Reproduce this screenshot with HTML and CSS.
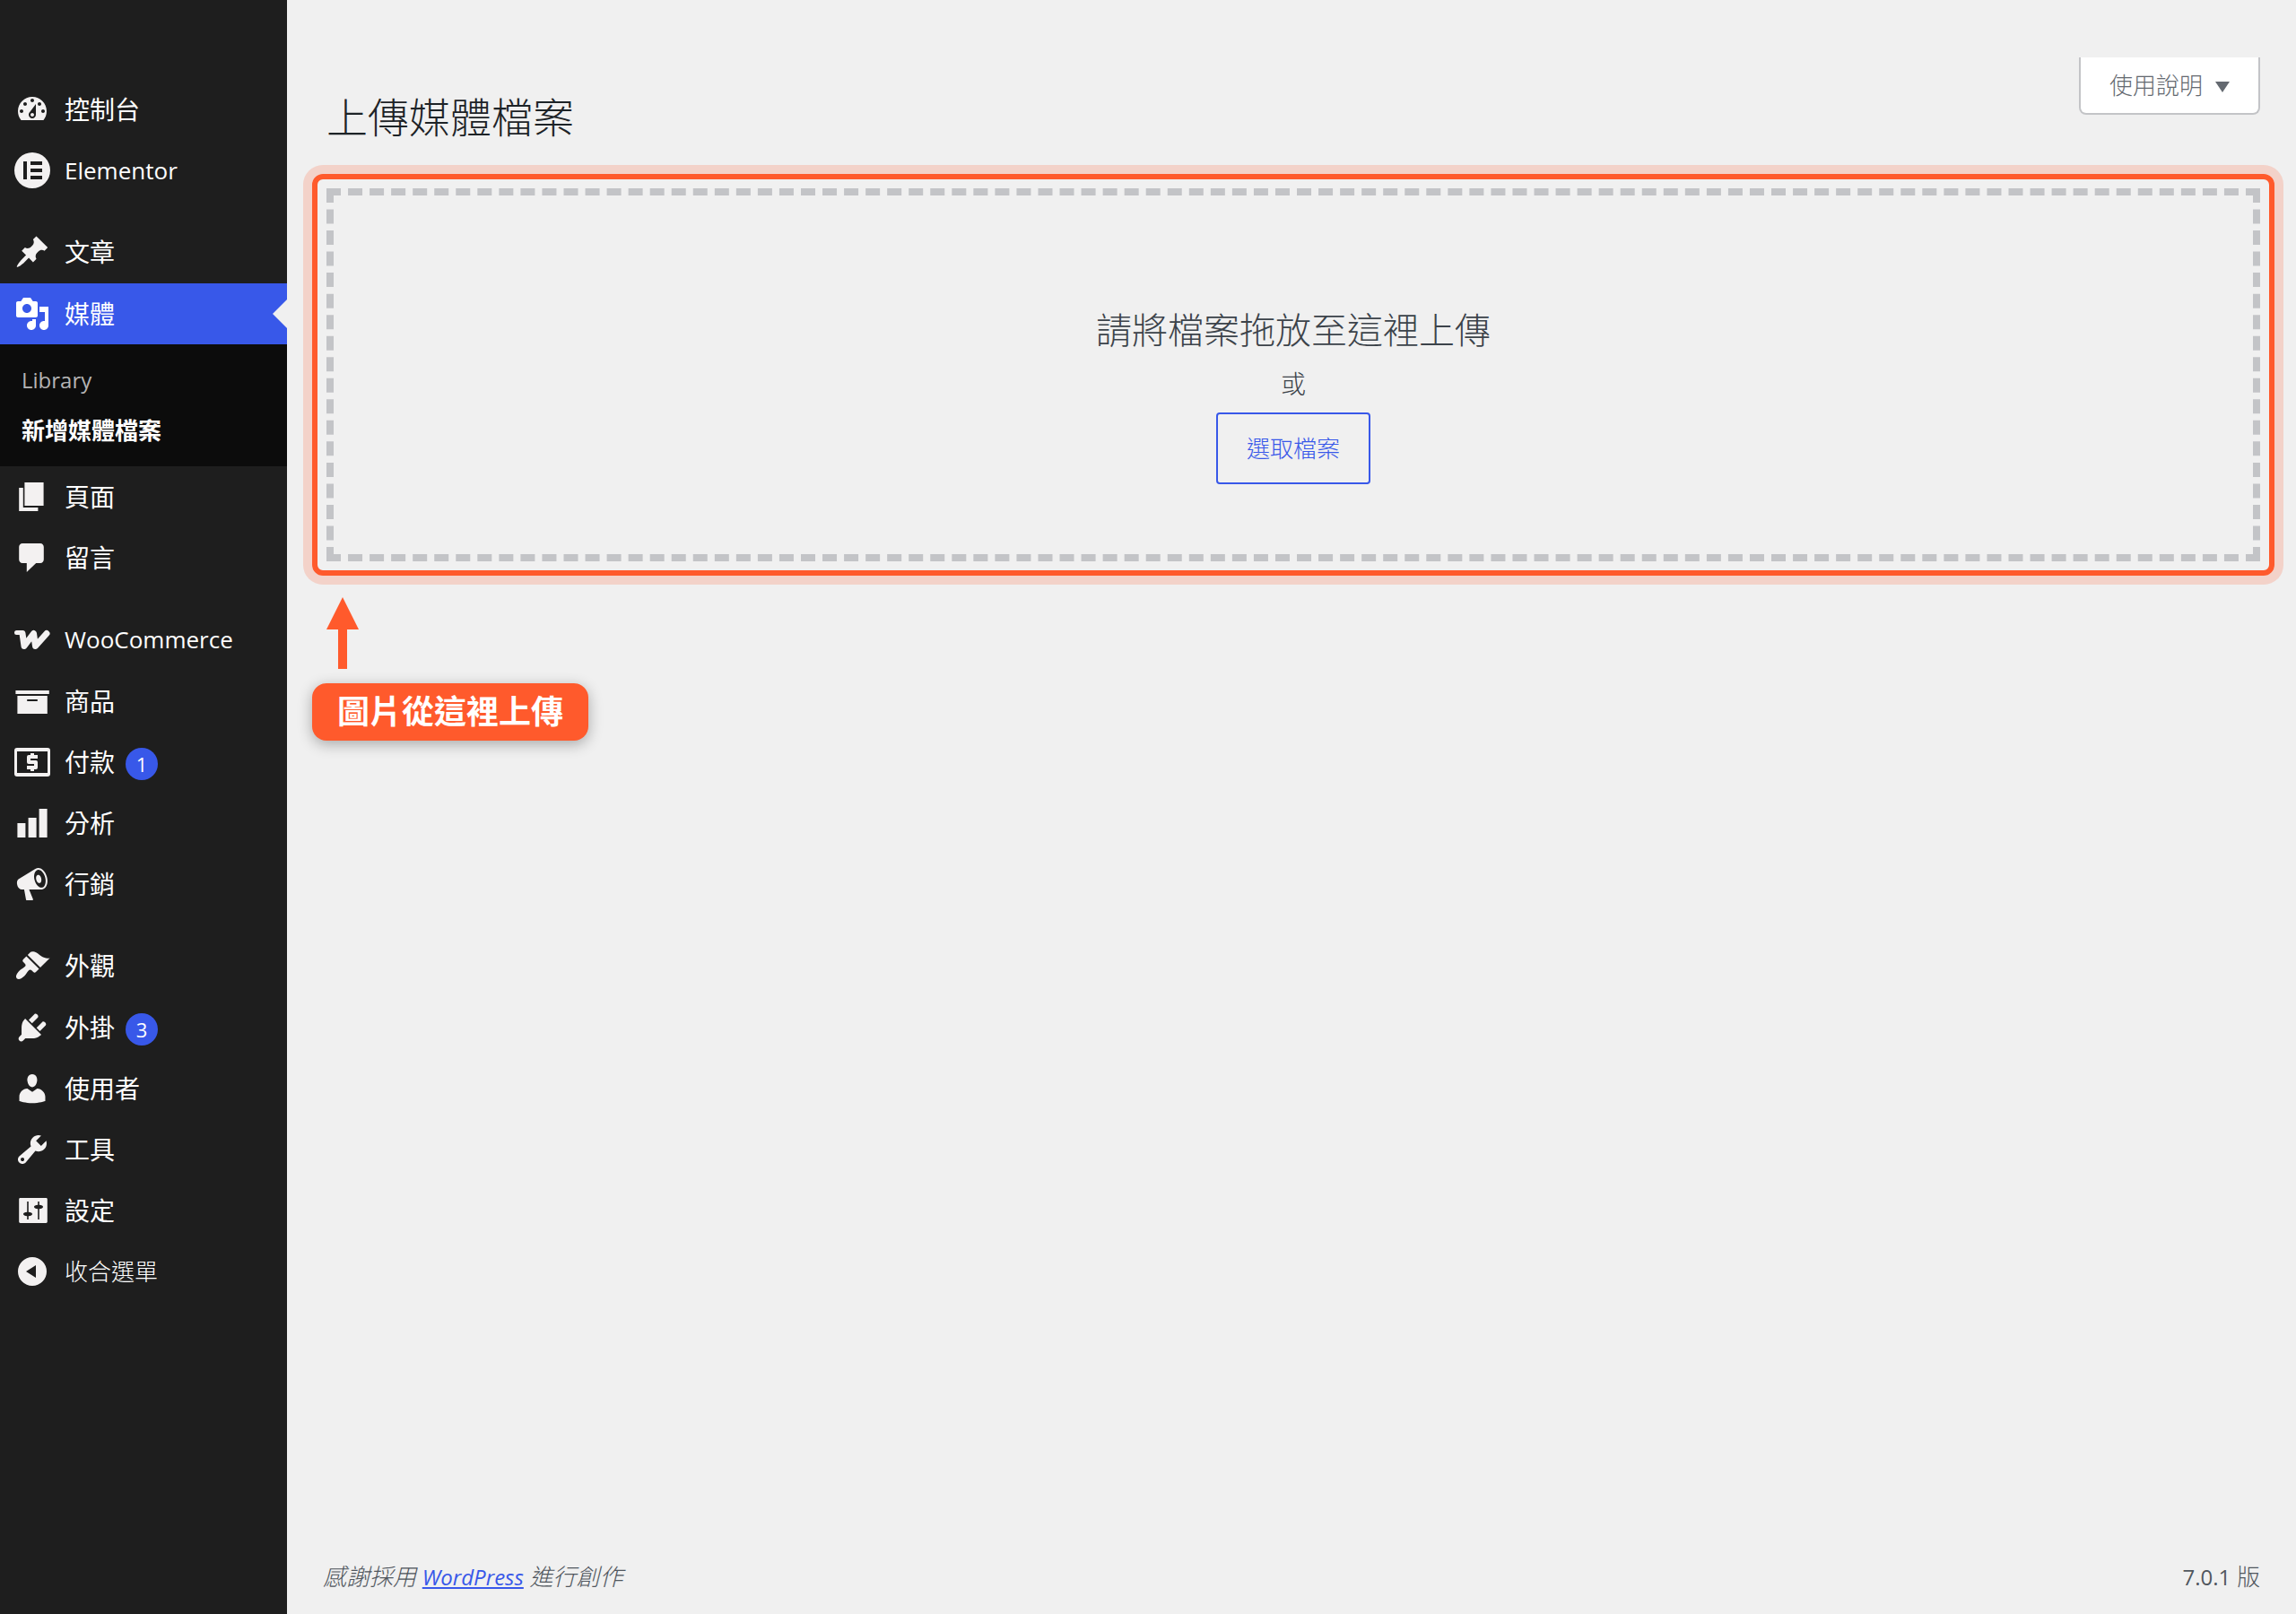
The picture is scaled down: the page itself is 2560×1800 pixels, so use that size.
FILE: index.html
```html
<!DOCTYPE html>
<html lang="zh-Hant">
<head>
  <meta charset="UTF-8" />
  <meta name="viewport" content="width=device-width, initial-scale=1.0" />
  <title>上傳媒體檔案</title>
  <link rel="stylesheet" href="styles.css">
</head>
<body>
  <nav class="sidebar">
    <ul class="menu">
      <li>
        <a href="#"><svg class="icon" viewBox="0 0 20 20"><path d="M3.76 16h12.48c1.1-1.37 1.76-3.11 1.76-5 0-4.42-3.58-8-8-8s-8 3.58-8 8c0 1.89.66 3.63 1.76 5zM10 4c.55 0 1 .45 1 1s-.45 1-1 1-1-.45-1-1 .45-1 1-1zM6 6c.55 0 1 .45 1 1s-.45 1-1 1-1-.45-1-1 .45-1 1-1zm8 0c.55 0 1 .45 1 1s-.45 1-1 1-1-.45-1-1 .45-1 1-1zm-5.37 5.55L12 7v6c0 1.1-.9 2-2 2s-2-.9-2-2c0-.57.24-1.08.63-1.45zM4 10c.55 0 1 .45 1 1s-.45 1-1 1-1-.45-1-1 .45-1 1-1zm12 0c.55 0 1 .45 1 1s-.45 1-1 1-1-.45-1-1 .45-1 1-1zm-5 3c0-.55-.45-1-1-1s-1 .45-1 1 .45 1 1 1 1-.45 1-1z"/></svg><span class="label">控制台</span></a>
      </li>
      <li>
        <a href="#"><svg class="icon" viewBox="0 0 40 40"><path fill-rule="evenodd" d="M20 0a20 20 0 1 0 0 40 20 20 0 0 0 0-40zM10 10h4v20h-4zM18 10h13v4H18zM18 18h13v4H18zM18 26h13v4H18z"/></svg><span class="latin">Elementor</span></a>
      </li>

      <li class="group-start">
        <a href="#"><svg class="icon" viewBox="0 0 20 20"><path d="M10.44 3.02l1.82-1.82 6.36 6.35-1.83 1.82c-1.05-.68-2.48-.57-3.41.36l-.75.75c-.92.93-1.04 2.35-.35 3.41l-1.83 1.82-2.41-2.41-2.8 2.79c-.42.42-3.38 2.71-3.8 2.29s1.86-3.39 2.28-3.81l2.79-2.79L4.1 9.36l1.83-1.82c1.05.69 2.48.57 3.4-.36l.75-.75c.93-.92 1.05-2.35.36-3.41z"/></svg><span class="label">文章</span></a>
      </li>
      <li>
        <a class="current" href="#"><svg class="icon" viewBox="0 0 20 20"><path d="M13 11V4c0-.55-.45-1-1-1h-1.67L9 1H5L3.67 3H2c-.55 0-1 .45-1 1v7c0 .55.45 1 1 1h10c.55 0 1-.45 1-1zM7 4.5c1.38 0 2.5 1.12 2.5 2.5S8.38 9.5 7 9.5 4.5 8.38 4.5 7 5.62 4.5 7 4.5zM14 6h5v10.5c0 1.38-1.12 2.5-2.5 2.5S14 17.88 14 16.5s1.12-2.5 2.5-2.5c.17 0 .34.02.5.05V9h-3V6zm-4 8.05V13h2v3.5c0 1.38-1.12 2.5-2.5 2.5S7 17.88 7 16.5 8.12 14 9.5 14c.17 0 .34.02.5.05z"/></svg><span class="label">媒體</span></a>
        <ul class="submenu">
          <li><a class="library" href="#">Library</a></li>
          <li><a class="active" href="#">新增媒體檔案</a></li>
        </ul>
      </li>
      <li>
        <a href="#"><svg class="icon" viewBox="0 0 20 20"><path d="M5.7 15V2h10.6v13H5.7zM4.9 16h8.3v2H2.6V5h2.3v11z"/></svg><span class="label">頁面</span></a>
      </li>
      <li>
        <a href="#"><svg class="icon" viewBox="0 0 20 20"><path d="M4.5 2h10c1.1 0 1.9.9 1.9 2v7c0 1.1-.8 2-1.9 2h-2.4l-5.2 5v-5H4.5c-1.1 0-1.9-.9-1.9-2V4c0-1.1.8-2 1.9-2z"/></svg><span class="label">留言</span></a>
      </li>

      <li class="group-start">
        <a href="#"><svg class="icon icon-line" viewBox="0 0 40 40"><path stroke-width="5" d="M2.5 12.500H8"/><path stroke-width="7" d="M9 13.500l2 14 10.500-14 2 14L36 13.500"/></svg><span class="latin">WooCommerce</span></a>
      </li>
      <li>
        <a href="#"><svg class="icon" viewBox="0 0 20 20"><path d="M19.4 4v2H.7V4h18.7zM1.7 7h16.700v10H1.700V7zm11.200 3V9H7.100v1h5.800z"/></svg><span class="label">商品</span></a>
      </li>
      <li>
        <a href="#"><svg class="icon" viewBox="0 0 40 40"><path fill-rule="evenodd" d="M3 4h34a3 3 0 0 1 3 3v26a3 3 0 0 1-3 3H3a3 3 0 0 1-3-3V7a3 3 0 0 1 3-3zm0 4v24h34V8z"/><path d="M18 10h4v2h4v4h-8v2h6a2 2 0 0 1 2 2v6a2 2 0 0 1-2 2h-2v2h-4v-2h-4v-4h8v-2h-6a2 2 0 0 1-2-2v-6a2 2 0 0 1 2-2h2z"/></svg><span class="label">付款</span><span class="badge">1</span></a>
      </li>
      <li>
        <a href="#"><svg class="icon" viewBox="0 0 20 20"><path d="M18.3 18V2h-4.500v16h4.500zm-6 0V7H7.800v11h4.500zM1.700 18h4.500v-8H1.700v8z"/></svg><span class="label">分析</span></a>
      </li>
      <li>
        <a href="#"><svg class="icon" viewBox="0 0 20 20"><path d="M18.15 5.94c.46 1.62.38 3.22-.02 4.48-.42 1.28-1.26 2.18-2.3 2.48-.16.06-.26.06-.4.06-.06.02-.12.02-.18.02-.06.02-.14.02-.22.02h-6.8l2.22 5.5c.02.14-.06.26-.14.34-.08.1-.24.16-.34.16H6.95c-.1 0-.26-.06-.34-.16-.08-.08-.16-.2-.14-.34l-1-5.5H4.25l-.02-.02c-.5.06-1.08-.18-1.54-.62s-.88-1.08-1.06-1.88c-.24-.8-.2-1.56-.02-2.2.18-.62.58-1.08 1.06-1.3l.02-.02 9-5.4c.1-.06.18-.1.24-.16.06-.04.14-.08.24-.12.16-.08.28-.12.5-.18 1.04-.3 2.24.1 3.22.98s1.84 2.24 2.26 3.86zm-2.58 5.98h-.02c.4-.1.74-.34 1.04-.7.58-.7.86-1.76.86-3.04 0-.64-.1-1.3-.28-1.98-.34-1.36-1.02-2.5-1.78-3.24s-1.68-1.1-2.46-.88c-.82.22-1.4.96-1.7 2-.32 1.04-.28 2.36.06 3.72.38 1.36 1 2.5 1.8 3.24.78.74 1.62 1.1 2.48.88zm-2.54-7.08c.22-.04.42-.02.62.04.38.16.76.48 1.02 1s.42 1.2.42 1.78c0 .3-.04.56-.12.8-.18.48-.44.84-.86.94-.34.1-.8-.06-1.14-.4s-.64-.86-.78-1.5c-.18-.62-.12-1.24.02-1.72s.48-.84.82-.94z"/></svg><span class="label">行銷</span></a>
      </li>

      <li class="group-start">
        <a href="#"><svg class="icon" viewBox="0 0 20 20"><path d="M14.48 11.06L7.41 3.99l1.5-1.5c.5-.56 2.3-.47 3.51.32 1.21.8 1.43 1.28 2.91 2.1 1.18.64 2.45 1.26 4.45.85zm-.71.71L6.7 4.7 4.93 6.47c-.39.39-.39 1.02 0 1.41l1.06 1.06c.39.39.39 1.03 0 1.42-.6.6-1.43 1.11-2.21 1.69-.35.26-.7.53-1.01.84C1.43 14.23.4 16.08 1.4 17.07c.99 1 2.84-.03 4.18-1.36.31-.31.58-.66.85-1.02.57-.78 1.08-1.61 1.69-2.21.39-.39 1.02-.39 1.41 0l1.06 1.06c.39.39 1.02.39 1.41 0z"/></svg><span class="label">外觀</span></a>
      </li>
      <li>
        <a href="#"><svg class="icon" viewBox="0 0 20 20"><path d="M13.11 4.36L9.87 7.6 8 5.73l3.24-3.24c.35-.34 1.05-.2 1.56.32.52.51.66 1.21.31 1.55zm-8 1.77l.91-1.12 9.01 9.01-1.19.84c-.71.71-2.63 1.16-3.82 1.16H6.14L4.9 17.26c-.59.59-1.54.59-2.12 0-.59-.58-.59-1.53 0-2.12l1.24-1.24v-3.88c0-1.13.4-3.19 1.09-3.89zm7.26 3.97l3.24-3.24c.34-.35 1.04-.21 1.55.31.52.51.66 1.21.31 1.55l-3.24 3.25z"/></svg><span class="label">外掛</span><span class="badge">3</span></a>
      </li>
      <li>
        <a href="#"><svg class="icon" viewBox="0 0 20 20"><path d="M10 9.25c-2.27 0-2.73-3.44-2.73-3.44C7 4.02 7.82 2 9.97 2c2.16 0 2.98 2.02 2.71 3.81 0 0-.41 3.44-2.68 3.44zm0 2.57L12.72 10c2.39 0 4.52 2.33 4.52 4.53v2.49s-3.65 1.13-7.24 1.13c-3.65 0-7.24-1.13-7.24-1.13v-2.49c0-2.25 1.94-4.48 4.47-4.48z"/></svg><span class="label">使用者</span></a>
      </li>
      <li>
        <a href="#"><svg class="icon" viewBox="0 0 20 20"><path d="M16.68 9.77c-1.34 1.34-3.3 1.67-4.95.99l-5.41 6.52c-.99.99-2.59.99-3.58 0s-.99-2.59 0-3.57l6.52-5.42c-.68-1.65-.35-3.61.99-4.95 1.28-1.28 3.12-1.62 4.72-1.06l-2.89 2.89 2.82 2.82 2.86-2.87c.53 1.58.18 3.39-1.08 4.65zM3.81 16.21c.4.39 1.04.39 1.43 0 .4-.4.4-1.04 0-1.43-.39-.4-1.03-.4-1.43 0-.39.39-.39 1.03 0 1.43z"/></svg><span class="label">工具</span></a>
      </li>
      <li>
        <a href="#"><svg class="icon" viewBox="0 0 20 20"><path fill-rule="evenodd" d="M3.3 3h14.4c.4 0 .7.3.7.7v12.6c0 .4-.3.7-.7.7H3.3c-.4 0-.7-.3-.7-.7V3.7c0-.4.3-.7.7-.7zM7.1 5v5.9c-1.3 0-2.1.5-2.1 1.1s.8 1.1 2.1 1.1V15h.8v-1.9c1.3 0 2.1-.5 2.1-1.1s-.8-1.1-2.1-1.1V5zM13.1 5v1.9c-1.3 0-2.1.5-2.1 1.1s.8 1.1 2.1 1.1V15h.8V9.1c1.3 0 2.1-.5 2.1-1.1s-.8-1.1-2.1-1.1V5z"/></svg><span class="label">設定</span></a>
      </li>
      <li>
        <button class="collapse" type="button"><svg class="icon" viewBox="0 0 20 20"><path fill-rule="evenodd" d="M10 2a8 8 0 1 0 0 16 8 8 0 0 0 0-16zM12 6.5v7L6.5 10z"/></svg><span class="label">收合選單</span></button>
      </li>
    </ul>
  </nav>

  <div class="content">
    <main>
      <header class="page-header">
        <h1>上傳媒體檔案</h1>
        <button class="help" type="button"><span class="label">使用說明</span><span class="caret"></span></button>
      </header>

      <div class="highlight">
        <div class="dropzone">
          <p class="drop-title">請將檔案拖放至這裡上傳</p>
          <p class="drop-or">或</p>
          <button class="select-files" type="button">選取檔案</button>
        </div>
      </div>

      <div class="callout">
        <svg class="arrow" viewBox="0 0 36 80"><path d="M18 0l18 36H23v44H13V36H0z"/></svg>
        <strong class="callout-label">圖片從這裡上傳</strong>
      </div>
    </main>

    <footer>
      <em>感謝採用 <a href="#">WordPress</a> 進行創作</em>
      <span><span class="version">7.0.1</span> 版</span>
    </footer>
  </div>
</body>
</html>
```
FILE: styles.css
```css
* {
  box-sizing: border-box;
}
body {
  margin: 0;
  min-height: 100vh;
  display: flex;
  background-color: #f0f0f0;
  color: #3c434a;
  font-family: "Open Sans", "Noto Sans CJK TC", sans-serif;
  font-size: 26px;
}
ul {
  list-style: none;
  margin: 0;
  padding: 0;
}
button {
  font-family: inherit;
  font-size: 26px;
  cursor: pointer;
}

/* Sidebar */
.sidebar {
  width: 320px;
  flex-shrink: 0;
  padding-top: 88px;
  background-color: #1e1e1e;
}
.menu > li > a,
.collapse {
  position: relative;
  display: flex;
  align-items: center;
  width: 100%;
  height: 68px;
  padding: 0 16px;
  color: #fff;
  font-size: 28px;
  text-decoration: none;
}
.menu > .group-start {
  margin-top: 22px;
}
.menu > .group-start > a {
  height: 70px;
}
.label {
  padding-bottom: 3px;
}
.latin {
  font-size: 26px;
}
.icon {
  width: 40px;
  height: 40px;
  margin-right: 16px;
  flex-shrink: 0;
  fill: #f3f1f1;
}
.icon-line {
  fill: none;
  stroke: #f3f1f1;
  stroke-linecap: round;
  stroke-linejoin: round;
}
.menu > li > .current {
  background-color: #3858e9;
}
.current .icon {
  fill: #fff;
}
.current::after {
  content: "";
  position: absolute;
  right: 0;
  top: 18px;
  border: 16px solid transparent;
  border-left: 0;
  border-right-color: #f0f0f0;
}
.submenu {
  padding: 12px 24px;
  background-color: #0c0c0c;
}
.submenu a {
  display: block;
  line-height: 56px;
  color: #b4b4b4;
  text-decoration: none;
}
.submenu .library {
  font-size: 24px;
}
.submenu .active {
  color: #fff;
  font-weight: bold;
}
.badge {
  width: 36px;
  height: 36px;
  margin: 4px 0 0 12px;
  border-radius: 50%;
  background-color: #3858e9;
  font-size: 22px;
  line-height: 36px;
  text-align: center;
}
.collapse {
  border: none;
  background: none;
  font-size: 26px;
  font-weight: 300;
}

/* Content */
.content {
  flex: 1;
  display: flex;
  flex-direction: column;
  justify-content: space-between;
  padding: 64px 24px 18px 28px;
}
.page-header {
  display: flex;
  justify-content: space-between;
  align-items: flex-start;
  padding: 0 16px;
  margin-bottom: 34px;
}
h1 {
  margin: 36px 0 0;
  color: #1d2327;
  font-size: 46px;
  font-weight: 300;
  line-height: 60px;
}
.help {
  display: flex;
  align-items: center;
  height: 64px;
  padding: 0 32px;
  border: 2px solid #c3c4c7;
  border-top: none;
  border-radius: 0 0 8px 8px;
  background-color: #fff;
  color: #646970;
  font-weight: 300;
}
.caret {
  margin: 4px 0 0 14px;
  border: 8px solid transparent;
  border-top: 12px solid #646970;
  border-bottom: none;
}
.highlight {
  padding: 10px;
  border: 6px solid #ff5a2c;
  border-radius: 12px;
  box-shadow: 0 0 0 10px rgba(255, 90, 44, 0.2);
}
.dropzone {
  display: flex;
  flex-direction: column;
  align-items: center;
  padding: 126px 20px 78px;
  border: 8px dashed #c3c4c7;
}
.dropzone p {
  margin: 0 0 12px;
  line-height: 48px;
}
.drop-title {
  font-size: 40px;
  font-weight: 300;
}
.dropzone .drop-or {
  margin-bottom: 8px;
  font-size: 28px;
  font-weight: 300;
}
.select-files {
  height: 80px;
  padding: 0 32px 2px;
  border: 2px solid #3858e9;
  border-radius: 4px;
  background: none;
  color: #3858e9;
  font-weight: 300;
}

/* Upload hint */
.callout {
  display: flex;
  flex-direction: column;
  align-items: flex-start;
  gap: 16px;
  margin-top: 24px;
}
.arrow {
  width: 36px;
  height: 80px;
  margin-left: 16px;
  fill: #ff5a2c;
}
.callout-label {
  padding: 0 28px;
  border-radius: 16px;
  background-color: #ff5a2c;
  box-shadow: 0 4px 16px rgba(0, 0, 0, 0.3);
  color: #fff;
  font-size: 36px;
  line-height: 64px;
}

footer {
  display: flex;
  justify-content: space-between;
  padding: 0 16px 0 12px;
  color: #50575e;
  font-weight: 300;
  line-height: 46px;
}
footer a,
.version {
  font-size: 24px;
  font-weight: 400;
}
footer a {
  color: #3858e9;
}
```
